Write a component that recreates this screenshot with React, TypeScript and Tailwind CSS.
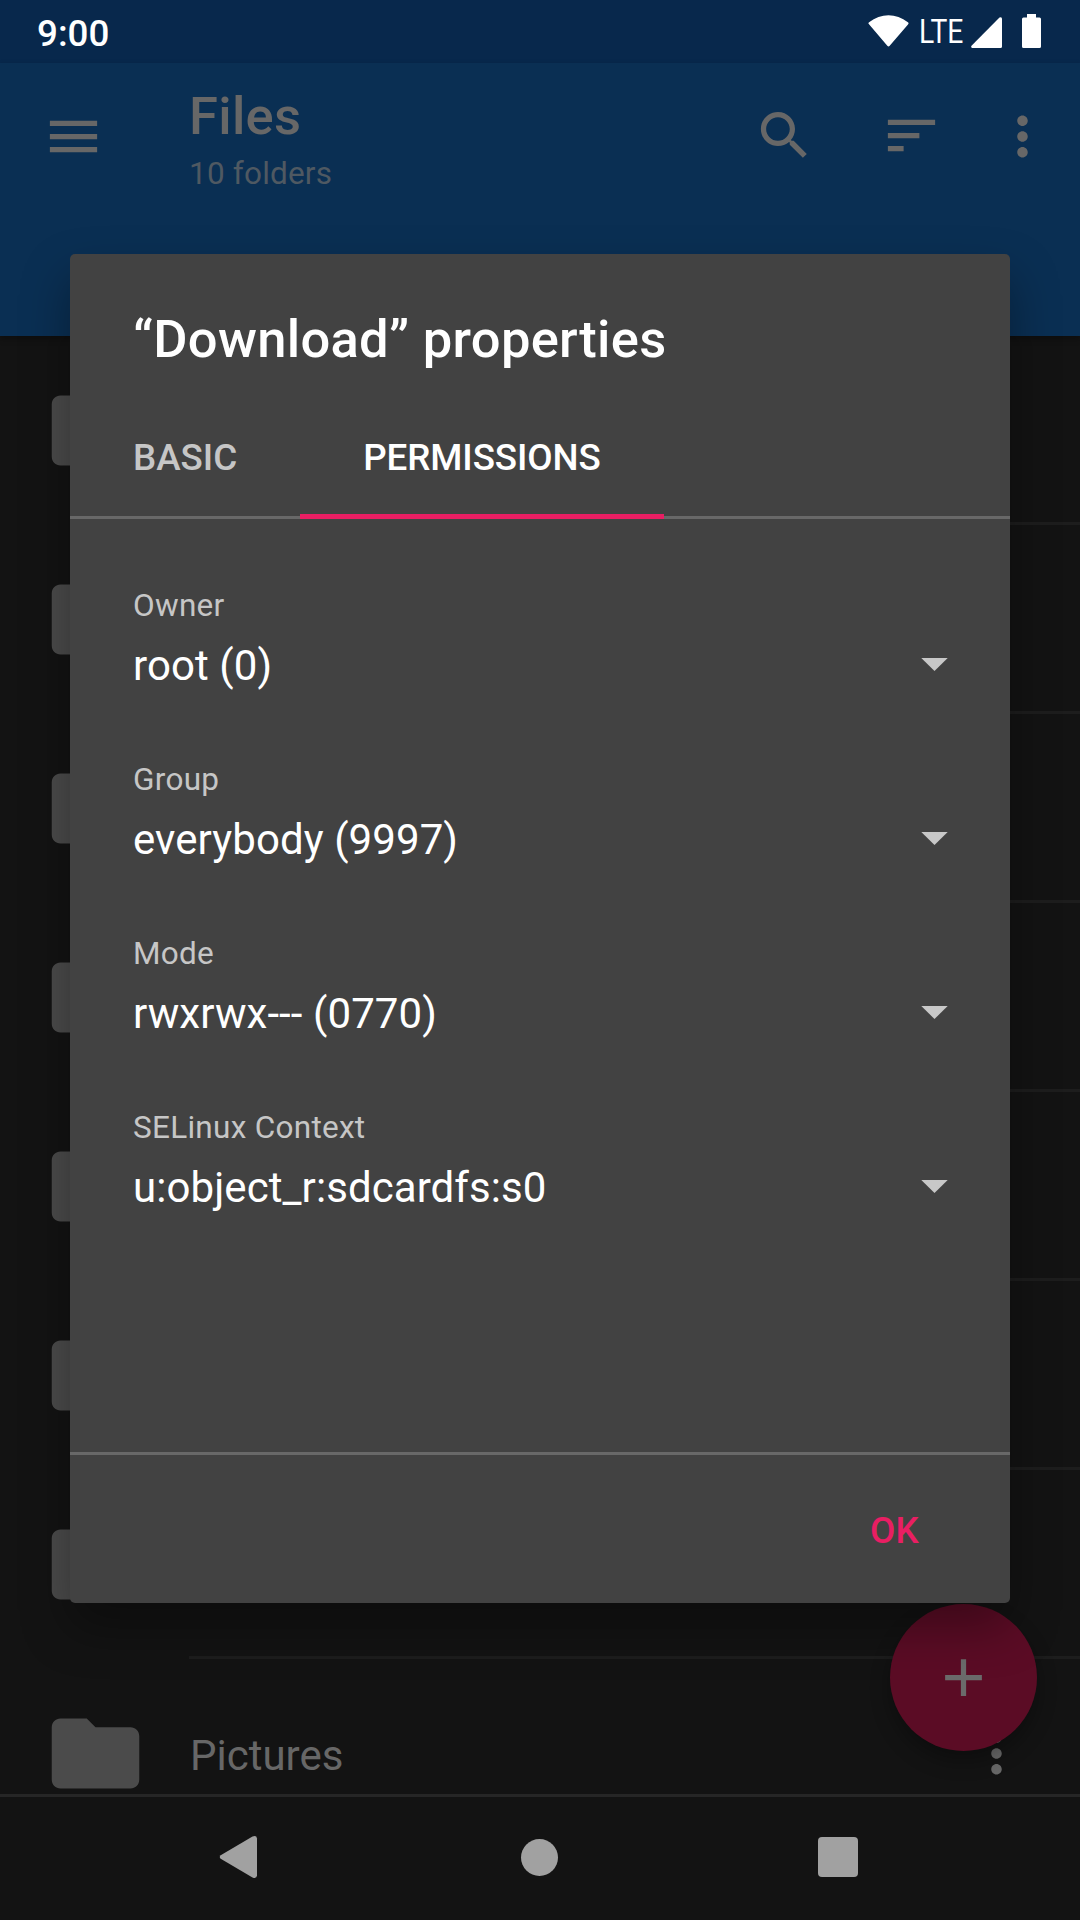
import type { ReactNode } from "react";

const FOLDER =
  "M10 4H4c-1.1 0-2 .9-2 2v12c0 1.1.9 2 2 2h16c1.1 0 2-.9 2-2V8c0-1.1-.9-2-2-2h-8z";
const MORE =
  "M12 8c1.1 0 2-.9 2-2s-.9-2-2-2-2 .9-2 2 .9 2 2 2zm0 2c-1.1 0-2 .9-2 2s.9 2 2 2 2-.9 2-2-.9-2-2-2zm0 6c-1.1 0-2 .9-2 2s.9 2 2 2 2-.9 2-2-.9-2-2-2z";
const SEARCH =
  "M15.5 14h-.79l-.28-.27C15.41 12.59 16 11.11 16 9.5 16 5.91 13.09 3 9.5 3S3 5.91 3 9.5 5.91 16 9.5 16c1.61 0 3.09-.59 4.23-1.57l.27.28v.79l5 4.99L20.49 19l-4.99-5zm-6 0C7.01 14 5 11.99 5 9.5S7.01 5 9.5 5 14 7.01 14 9.5 11.99 14 9.5 14z";

function Icon({ d, className }: { d: string; className: string }) {
  return (
    <svg viewBox="0 0 24 24" fill="currentColor" className={`shrink-0 ${className}`}>
      <path d={d} />
    </svg>
  );
}

function StatusBar() {
  return (
    <div className="flex h-[63px] shrink-0 items-center bg-[#08284c] pr-[39px] pl-[37px] text-white">
      <span className="mt-[5px] flex-1 text-[36.75px] leading-none font-medium">9:00</span>
      <svg className="mb-[1px] h-[32px] w-[41px]" viewBox="0 0 41 32" fill="currentColor">
        <path d="M1 9.2Q-.2 8.2 1.1 7.2C13-2.2 28-2.2 39.900 7.2Q41.200 8.200 40 9.400L21.700 30.800Q20.500 32 19.300 30.800Z" />
      </svg>
      <span className="mt-[2px] ml-[10px] w-[45px] origin-left scale-x-[0.87] text-[32.5px] leading-none">LTE</span>
      <svg className="mt-[2px] ml-[7px] h-[31px] w-[31px]" viewBox="0 0 31 31" fill="currentColor">
        <path d="M28.500.5Q31-.6 31 1.800V29.500Q31 31 29.500 31H1.200Q-.5 30.500.5 28.700Z" />
      </svg>
      <svg className="mb-[1px] ml-[20px] h-[34px] w-[19px]" viewBox="0 0 19 34" fill="currentColor">
        <path d="M5 0h9v3.500h3.500Q19 3.500 19 5v27.500q0 1.500-1.500 1.500h-16Q0 34 0 32.500V5q0-1.500 1.500-1.500H5z" />
      </svg>
    </div>
  );
}

function AppBar() {
  return (
    <header className="relative h-[273px] shrink-0 bg-[#0a2f53] text-[#676767] shadow-[0_3px_6px_rgba(0,0,0,0.3)]">
      <div className="flex h-[147px] items-center pr-[26px] pl-[42px]">
        <Icon d="M3 18h18v-2H3v2zm0-5h18v-2H3v2zm0-7v2h18V6H3z" className="size-[63px]" />
        <div className="mt-[4px] ml-[84px] flex flex-1 flex-col">
          <h1 className="text-[52.5px] leading-[62px] font-medium tracking-[0.3px]">Files</h1>
          <p className="mt-[8px] text-[31.5px] leading-[37px] tracking-[0.2px] text-[#4f5962]">10 folders</p>
        </div>
        <Icon d={SEARCH} className="mr-[64px] mb-[2px] size-[63px]" />
        <Icon d="M3 18h6v-2H3v2zM3 6v2h18V6H3zm0 7h12v-2H3v2z" className="mr-[48px] mb-[2px] size-[63px]" />
        <Icon d={MORE} className="size-[63px]" />
      </div>
    </header>
  );
}

function FolderRow({ name }: { name?: string }) {
  return (
    <li className="flex h-[189px] shrink-0 items-stretch pl-[43px]">
      <Icon d={FOLDER} className="size-[105px] self-center text-[#4b4b4b]" />
      <div className="ml-[41px] flex flex-1 items-center border-b-[3px] border-[#1d1d1d] pt-[3px] pr-[52px] text-[#676767]">
        <span className="mt-[4px] ml-[1px] flex-1 text-[42px] leading-none">{name}</span>
        <Icon d={MORE} className="size-[63px]" />
      </div>
    </li>
  );
}

function NavBar() {
  return (
    <nav className="relative flex h-[126px] shrink-0 items-center justify-between border-t-[3px] border-[#262626] bg-[#131313] pr-[222px] pb-[3px] pl-[219px] text-[#a1a1a1]">
      <svg className="h-[42px] w-[39px]" viewBox="0 0 39 42" fill="currentColor">
        <path d="M1.700 19.200 33.500.6Q37.500-1 38 2.500V39.500Q37.500 43 33.500 41.400L1.700 22.800Q-.2 21 1.700 19.200Z" />
      </svg>
      <span className="ml-[3px] size-[37px] rounded-full bg-current" />
      <span className="size-[40px] rounded-[4px] bg-current" />
    </nav>
  );
}

function Field({ label, value }: { label: string; value: string }) {
  return (
    <div className="h-[174px] px-[63px]">
      <p className="text-[31.5px] leading-[37px] tracking-[0.28px] text-[#c6c6c6]">{label}</p>
      <div className="mt-[17px] flex items-center justify-between">
        <span className="text-[42px] leading-[49px] tracking-[0.08px] text-white">{value}</span>
        <svg className="mr-[-1px] mb-[2px] h-[13px] w-[27px]" viewBox="0 0 27 13" fill="#c8c8c8">
          <path d="M.3 0h26.400L13.500 13z" />
        </svg>
      </div>
    </div>
  );
}

function Tab({ children, active }: { children: ReactNode; active?: boolean }) {
  return (
    <button
      className={
        active
          ? "mb-[-3px] border-b-[5px] border-[#e91e63] px-[63px] pt-[8px] tracking-[-0.1px] text-white"
          : "border-b-[2px] border-transparent px-[63px] pt-[8px] text-[#c6c6c6]"
      }
    >
      {children}
    </button>
  );
}

function PropertiesDialog() {
  return (
    <section className="absolute top-[254px] left-[70px] flex h-[1349px] w-[940px] flex-col rounded-[5px] bg-[#424242] shadow-[0_24px_48px_rgba(0,0,0,0.34)]">
      <h2 className="mt-[54px] px-[63px] text-[52.5px] leading-[62px] font-medium tracking-[0.3px] text-white">
        “Download” properties
      </h2>
      <div className="mt-[23px] flex h-[126px] border-b-[3px] border-[#686868] text-[36.75px] leading-[43px] font-medium">
        <Tab>BASIC</Tab>
        <Tab active>PERMISSIONS</Tab>
      </div>
      <div className="flex-1 pt-[68px]">
        <Field label="Owner" value="root (0)" />
        <Field label="Group" value="everybody (9997)" />
        <Field label="Mode" value="rwxrwx--- (0770)" />
        <Field label="SELinux Context" value="u:object_r:sdcardfs:s0" />
      </div>
      <footer className="flex h-[151px] items-center justify-end border-t-[3px] border-[#686868] pt-[2px] pr-[91px]">
        <button className="text-[36.75px] leading-[43px] font-medium tracking-[0.2px] text-[#e91e63]">OK</button>
      </footer>
    </section>
  );
}

const COVERED_ROWS = 7;

export default function App() {
  return (
    <div className="relative flex h-[1920px] w-[1080px] flex-col overflow-hidden bg-[#131313] font-[Roboto,sans-serif]">
      <StatusBar />
      <AppBar />
      <ul className="flex min-h-0 flex-1 flex-col overflow-hidden">
        {Array.from({ length: COVERED_ROWS }, (_, i) => (
          <FolderRow key={i} />
        ))}
        <FolderRow name="Pictures" />
      </ul>
      <NavBar />
      <button className="absolute top-[1604px] left-[890px] flex size-[147px] items-center justify-center rounded-full bg-[#5b0c25] text-[#6b6b6b] shadow-[0_10px_20px_rgba(0,0,0,0.3)]">
        <Icon d="M19 13h-6v6h-2v-6H5v-2h6V5h2v6h6v2z" className="size-[63px]" />
      </button>
      <PropertiesDialog />
    </div>
  );
}
